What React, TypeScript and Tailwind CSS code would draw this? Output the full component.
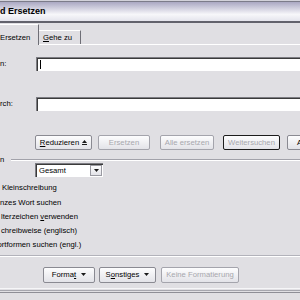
import React from "react";

const face = "bg-linear-to-b from-[#fdfdfe] to-[#e3e3e8]";
const btn = `flex items-center justify-center shrink-0 rounded-[2px] border ${face} text-[7.7px] leading-none`;

function Arrow({ up = false }: { up?: boolean }) {
  return (
    <svg width="5" height="3" viewBox="0 0 5 3" className="shrink-0">
      <path d={up ? "M0 3L2.5 0L5 3Z" : "M0 0L5 0L2.5 3Z"} fill="#1a1a1a" />
    </svg>
  );
}

function Field({ label, cursor = false }: { label: string; cursor?: boolean }) {
  return (
    <div className="flex items-center h-[14px]">
      <div className="w-[36px] shrink-0 text-[7.7px] leading-none">{label}</div>
      <div className="relative w-[300px] h-[14px] shrink-0 bg-white border-t border-l border-[#7c7c82] shadow-[inset_1px_1px_0_#3a3a3a]">
        {cursor && <span className="absolute left-[3px] top-[2px] w-px h-[9px] bg-black" />}
      </div>
    </div>
  );
}

const options = [
  { text: "Kleinschreibung", cls: "pl-[2px]" },
  { text: "nzes Wort suchen", cls: "" },
  { text: "lterzeichen verwenden", cls: "pl-px", u: "v" },
  { text: "chreibweise (englisch)", cls: "pl-px" },
  { text: "ortformen suchen (engl.)", cls: "-ml-[2.5px]" },
];

export default function App() {
  return (
    <div className="flex flex-col w-[300px] h-[300px] overflow-hidden bg-[#e0dfe3] text-black font-['Liberation_Sans',Arial,sans-serif]">
      <div className="h-px shrink-0 bg-[#d2d2da]" />
      <div className="h-px shrink-0 bg-[#7c7c8a]" />
      <div className="h-[19px] shrink-0 flex items-center bg-linear-to-b from-[#aaa8c2] via-[#f7f7fa] via-65% to-[#e4e4ec] text-[9px] font-bold leading-none">
        d Ersetzen
      </div>
      <div className="h-[2px] shrink-0 bg-[#62626c]" />

      {/* tabs */}
      <div className="h-[21px] shrink-0 flex items-end">
        <div className="relative z-10 -mb-px h-[21px] w-[39px] shrink-0 bg-[#e0dfe3] border-t border-white border-r border-r-[#6e6e76] pt-[9px] text-[7.7px] leading-none">
          Ersetzen
        </div>
        <div className="h-[14px] w-[42px] shrink-0 border-t border-white border-r border-r-[#6e6e76] pt-[3px] pl-[4px] text-[7.7px] leading-none">
          <span className="underline">G</span>ehe zu
        </div>
      </div>

      {/* panel */}
      <div className="flex flex-col flex-1 border-t border-white">
        <div className="mt-[12px]">
          <Field label="n:" cursor />
        </div>
        <div className="mt-[26px]">
          <Field label="rch:" />
        </div>

        <div className="mt-[24px] flex h-[15px] text-[7.7px]">
          <div className={`${btn} ml-[35px] w-[57px] h-[15px] gap-[3px] border-[#8a8a92]`}>
            <span>
              <span className="underline">R</span>eduzieren
            </span>
            <span className="flex flex-col gap-px">
              <Arrow up />
              <span className="w-[5px] h-px bg-[#1a1a1a]" />
            </span>
          </div>
          <div className={`${btn} ml-[6px] w-[52px] h-[15px] border-[#a4a4ac] text-[#a7a7ad]`}>Ersetzen</div>
          <div className={`${btn} ml-[10px] w-[54px] h-[15px] border-[#a4a4ac] text-[#a7a7ad]`}>Alle ersetzen</div>
          <div className={`${btn} ml-[9px] w-[57px] h-[15px] border-[#1c1c1c] text-[#a7a7ad]`}>Weitersuchen</div>
          <div className={`${btn} ml-[7px] w-[57px] h-[15px] border-[#8a8a92]`}>Abbrechen</div>
        </div>

        {/* group heading */}
        <div className="mt-[5px] h-[9px] flex items-center">
          <div className="w-[11px] shrink-0 text-[7.7px] leading-none">n</div>
          <div className="flex-1 border-t border-[#a2a2aa] border-b border-b-white" />
        </div>

        <div className="-mt-px ml-[35px] w-[68px] h-[14px] flex items-center bg-white border-t border-l border-[#7c7c82] shadow-[inset_1px_1px_0_#3a3a3a]">
          <span className="flex-1 pl-[3px] text-[7.7px] leading-none">Gesamt</span>
          <span className={`flex items-center justify-center w-[12px] h-[11px] mr-px border border-[#9a9aa2] ${face}`}>
            <Arrow />
          </span>
        </div>

        <div className="mt-[4px] flex flex-col">
          {options.map((o) => (
            <div key={o.text} className={`h-[14.3px] flex items-center text-[7.7px] leading-none whitespace-nowrap ${o.cls}`}>
              {o.u ? (
                <span>
                  lterzeichen <span className="underline">v</span>erwenden
                </span>
              ) : (
                o.text
              )}
            </div>
          ))}
        </div>

        <div className="mt-[3px] h-[2px] border-t border-[#b2b2ba] border-b border-b-white" />

        <div className="mt-[9.5px] flex h-[16px]">
          <div className={`${btn} ml-[43px] w-[52px] h-[16px] gap-[5px] border-[#8a8a92]`}>
            <span>
              Forma<span className="underline">t</span>
            </span>
            <Arrow />
          </div>
          <div className={`${btn} ml-[4px] w-[57px] h-[16px] gap-[5px] border-[#8a8a92]`}>
            <span>
              S<span className="underline">o</span>nstiges
            </span>
            <Arrow />
          </div>
          <div className={`${btn} ml-[5px] w-[78px] h-[16px] border-[#a4a4ac] text-[#a7a7ad]`}>Keine Formatierung</div>
        </div>

        <div className="mt-[5px] h-px bg-[#f6f6f8]" />
        <div className="mt-px h-px bg-[#a6a6ae]" />
        <div className="mt-px h-px bg-[#8e8e96]" />
      </div>
    </div>
  );
}
